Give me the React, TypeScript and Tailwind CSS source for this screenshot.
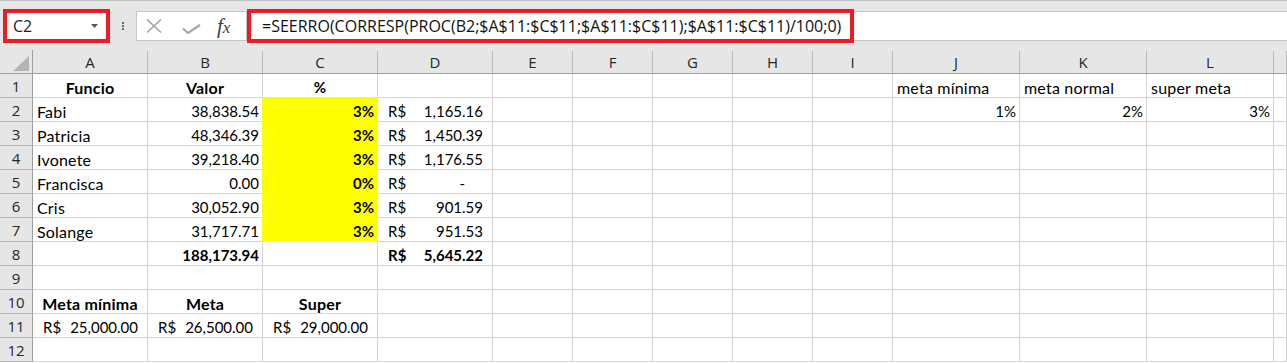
import React from "react";

type Cell = {
  t?: string;
  cur?: boolean;
  al?: "l" | "r" | "c";
  b?: boolean;
  y?: boolean;
  wide?: boolean;
  pr?: string;
  word?: boolean;
};

const COLS = ["A", "B", "C", "D", "E", "F", "G", "H", "I", "J", "K", "L", ""];

const DATA: Record<number, Record<string, Cell>> = {
  1: {
    A: { t: "Funcio", al: "c", b: true, word: true },
    B: { t: "Valor", al: "c", b: true, word: true },
    C: { t: "%", al: "c", b: true },
    J: { t: "meta mínima", word: true },
    K: { t: "meta normal", word: true },
    L: { t: "super meta", word: true },
  },
  2: {
    A: { t: "Fabi", word: true },
    B: { t: "38,838.54", al: "r" },
    C: { t: "3%", al: "r", b: true, y: true },
    D: { t: "1,165.16", cur: true },
    J: { t: "1%", al: "r" },
    K: { t: "2%", al: "r" },
    L: { t: "3%", al: "r" },
  },
  3: {
    A: { t: "Patricia", word: true },
    B: { t: "48,346.39", al: "r" },
    C: { t: "3%", al: "r", b: true, y: true },
    D: { t: "1,450.39", cur: true },
  },
  4: {
    A: { t: "Ivonete", word: true },
    B: { t: "39,218.40", al: "r" },
    C: { t: "3%", al: "r", b: true, y: true },
    D: { t: "1,176.55", cur: true },
  },
  5: {
    A: { t: "Francisca", word: true },
    B: { t: "0.00", al: "r" },
    C: { t: "0%", al: "r", b: true, y: true },
    D: { t: "-", cur: true, pr: "pr-[27px]" },
  },
  6: {
    A: { t: "Cris", word: true },
    B: { t: "30,052.90", al: "r" },
    C: { t: "3%", al: "r", b: true, y: true },
    D: { t: "901.59", cur: true },
  },
  7: {
    A: { t: "Solange", word: true },
    B: { t: "31,717.71", al: "r" },
    C: { t: "3%", al: "r", b: true, y: true },
    D: { t: "951.53", cur: true },
  },
  8: {
    B: { t: "188,173.94", al: "r", b: true },
    D: { t: "5,645.22", cur: true, b: true },
  },
  10: {
    A: { t: "Meta mínima", al: "c", b: true, word: true },
    B: { t: "Meta", al: "c", b: true, word: true },
    C: { t: "Super", al: "c", b: true, word: true },
  },
  11: {
    A: { t: "25,000.00", cur: true, wide: true },
    B: { t: "26,500.00", cur: true, wide: true },
    C: { t: "29,000.00", cur: true, wide: true },
  },
};

const cellFont = { fontFamily: "Lato, 'Noto Sans', sans-serif" };
const uiFont = { fontFamily: "'Open Sans', 'Noto Sans', sans-serif" };

function GridCell({ row, col }: { row: number; col: string }) {
  const c = DATA[row]?.[col];
  const below = DATA[row + 1]?.[col];
  const right = col ? DATA[row]?.[COLS[COLS.indexOf(col) + 1]] : undefined;
  // fill hides the grid lines round it
  const br = c?.y || right?.y ? "border-r-[#ffff00]" : "border-r-[#d4d4d4]";
  const bb = c?.y || below?.y ? "border-b-[#ffff00]" : "border-b-[#d4d4d4]";
  const bg = c?.y ? "bg-[#ffff00]" : "bg-white";
  const weight = c?.b ? "font-bold" : "font-normal";

  if (c?.cur) {
    return (
      <div
        className={`h-6 pt-[4px] border-r border-b ${br} ${bb} ${bg} ${weight} flex items-center justify-between text-[15px] text-black ${
          c.wide ? "pl-[10px] pr-[9px]" : "pl-[10px]"
        } ${c.pr ?? (c.wide ? "" : "pr-[9px]")}`}
        style={cellFont}
      >
        <span>R$</span>
        <span>{c.t}</span>
      </div>
    );
  }

  const align =
    c?.al === "r" ? "justify-end pr-[3px]" : c?.al === "c" ? "justify-center" : "justify-start pl-[4px]";
  const size = c?.word ? "text-[16px] tracking-[0.2px]" : "text-[15px]";

  return (
    <div
      className={`h-6 pt-[4px] border-r border-b ${br} ${bb} ${bg} ${weight} flex items-center ${align} whitespace-nowrap overflow-visible ${size} text-black`}
      style={cellFont}
    >
      {c?.t}
    </div>
  );
}

function Toolbar() {
  return (
    <div className="h-[50px] bg-[#e6e6e6] border-t border-[#c3c3c3] flex items-start">
      {/* Name box */}
      <div className="ml-[3px] mt-[8px] w-[107px] h-[34px] border-4 border-[#ed1c24] bg-white flex items-center justify-between pl-[6px] pr-[8px]">
        <span className="text-[16px] text-[#1e1e1e]" style={uiFont}>
          C2
        </span>
        <svg width="7" height="4" viewBox="0 0 7 4">
          <path d="M0 0h7L3.5 4z" fill="#595959" />
        </svg>
      </div>

      {/* Grip dots */}
      <div className="ml-[12px] mt-[21px] flex flex-col gap-[1px]">
        <div className="w-[2px] h-[2px] bg-[#6b6b6b]" />
        <div className="w-[2px] h-[2px] bg-[#6b6b6b]" />
        <div className="w-[2px] h-[2px] bg-[#6b6b6b]" />
      </div>

      {/* Cancel / enter / fx */}
      <div className="ml-[12px] mt-[10px] w-[111px] h-[30px] border border-[#c6c6c6] bg-white flex items-center">
        <svg width="16" height="14" viewBox="0 0 16 14" className="ml-[9px]">
          <path d="M1 0.5L15 13.5M15 0.5L1 13.5" stroke="#a6a6a6" strokeWidth="1.6" />
        </svg>
        <svg width="19" height="10" viewBox="0 0 19 10" className="ml-[20px] mt-[6px]">
          <path d="M1 4.5L6 9L18 1" stroke="#a6a6a6" strokeWidth="2.2" fill="none" />
        </svg>
        <span
          className="ml-[16px] text-[21px] italic text-[#404040] leading-none"
          style={{ fontFamily: "'Liberation Serif', 'DejaVu Serif', serif" }}
        >
          f<span className="text-[17px]">x</span>
        </span>
      </div>

      {/* Formula */}
      <div className="mt-[8px] w-[607px] h-[34px] border-4 border-[#ed1c24] bg-white flex items-center pl-[11px]">
        <span className="text-[16px] text-[#111] whitespace-nowrap" style={uiFont}>
          =SEERRO(CORRESP(PROC(B2;$A$11:$C$11;$A$11:$C$11);$A$11:$C$11)/100;0)
        </span>
      </div>
      <div className="mt-[10px] flex-1 h-[30px] bg-white border-y border-[#c6c6c6]" />
    </div>
  );
}

export default function App() {
  const rows = Array.from({ length: 12 }, (_, i) => i + 1);
  return (
    <div className="w-[1287px] h-[363px] overflow-hidden bg-white">
      <Toolbar />
      <div className="grid grid-cols-[33px_115px_115px_115px_115px_80px_80px_80px_80px_80px_127px_127px_127px_1fr]">
        {/* header row */}
        <div className="h-6 bg-[#e6e6e6] border-r border-b border-[#9e9e9e] flex items-end justify-end pr-[3px] pb-[2px]">
          <svg width="16" height="15" viewBox="0 0 16 15">
            <path d="M16 0V15H0z" fill="#b4b4b4" />
          </svg>
        </div>
        {COLS.map((c, i) => (
          <div key={i} className="h-6 bg-[#e6e6e6] border-b border-[#9e9e9e] flex items-stretch">
            <div
              className="flex-1 flex items-center justify-center pt-[1px] text-[15px] text-[#262626]"
              style={uiFont}
            >
              {c}
            </div>
            <div className="w-px mt-[1px] bg-[#b9b9b9]" />
          </div>
        ))}
        {rows.map((r) => (
          <React.Fragment key={r}>
            <div
              className="h-6 pt-[2px] bg-[#e6e6e6] border-r border-r-[#9e9e9e] border-b border-b-[#b9b9b9] flex items-center justify-center text-[15px] text-[#262626]"
              style={uiFont}
            >
              {r}
            </div>
            {COLS.map((c, i) => (
              <GridCell key={i} row={r} col={c} />
            ))}
          </React.Fragment>
        ))}
      </div>
    </div>
  );
}
